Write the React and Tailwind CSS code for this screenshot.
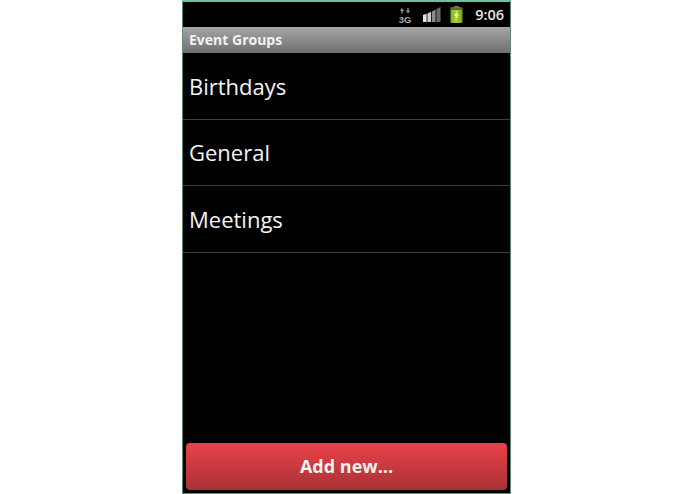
const font = { fontFamily: '"Open Sans", "Noto Sans", sans-serif' };

function DataIcon() {
  return (
    <svg width="14" height="16" viewBox="0 0 14 16" className="block">
      <path d="M4 1 L1.8 4 H3.3 V6.5 H4.7 V4 H6.2 Z" fill="#8e8e8e" />
      <path d="M10 6.5 L7.8 3.5 H9.3 V1 H10.7 V3.5 H12.2 Z" fill="#8e8e8e" />
      <text x="7" y="15.5" textAnchor="middle" fontSize="9.5" fontWeight="700" fill="#a8a8a8" fontFamily="Liberation Sans, sans-serif">3G</text>
    </svg>
  );
}

function SignalIcon() {
  return (
    <svg width="18" height="15" viewBox="0 0 18 15" className="block">
      <path d="M0 8 L3.6 6.8 V15 H0 Z" fill="#e4e4e4" />
      <path d="M4.4 6.5 L8 4.8 V15 H4.4 Z" fill="#cfcfcf" />
      <path d="M8.8 4.5 L12.6 2.4 V15 H8.8 Z" fill="#8a8a8a" />
      <path d="M13.4 2 L17.5 0 V15 H13.4 Z" fill="#6a6a6a" />
    </svg>
  );
}

function BatteryIcon() {
  return (
    <svg width="13" height="17" viewBox="0 0 13 17" className="block">
      <defs>
        <linearGradient id="bat" x1="0" y1="0" x2="1" y2="0">
          <stop offset="0" stopColor="#7fae1c" />
          <stop offset="0.5" stopColor="#a8d62c" />
          <stop offset="1" stopColor="#76a018" />
        </linearGradient>
      </defs>
      <rect x="4" y="0" width="5" height="2" fill="#6a6a6a" />
      <rect x="0.5" y="1.5" width="12" height="15.5" rx="1.5" fill="url(#bat)" />
      <rect x="0.5" y="1.5" width="12" height="2.5" fill="#5d6b3a" />
      <path d="M7.4 4.5 L3.8 10 H6 L5.2 14.5 L9.2 8.5 H7 Z" fill="#e4f29a" />
    </svg>
  );
}

function Row({ label }) {
  return (
    <div className="h-[66.5px] flex items-center pl-[6px] pt-[1px] border-b border-[#3f3f3f] text-[22px] text-[#f4f4f4]">
      {label}
    </div>
  );
}

export default function App() {
  return (
    <div className="w-[695px] h-[494px] bg-white overflow-hidden" style={font}>
      <div className="ml-[182px] w-[329px] h-[494px] flex flex-col bg-black border-x border-b border-[#5f8a79] border-t-2 border-t-[#63c79b]">
        <div className="h-[25px] shrink-0 flex items-center justify-end">
          <div className="mr-[7px]"><DataIcon /></div>
          <div className="ml-[4px]"><SignalIcon /></div>
          <div className="ml-[9px]"><BatteryIcon /></div>
          <div className="ml-[12px] mr-[6px] text-[14.5px] font-semibold text-[#e6e6e6]">9:06</div>
        </div>
        <div className="h-[26px] shrink-0 flex items-center pl-[6px] pb-[2px] bg-gradient-to-b from-[#a6a6a6] to-[#6f6f6f] text-[14px] font-bold text-[#f2f2f2]">
          Event Groups
        </div>
        <Row label="Birthdays" />
        <Row label="General" />
        <Row label="Meetings" />
        <div className="flex-1" />
        <div className="h-[47px] mb-[3px] mx-[3px] shrink-0 flex items-center justify-center rounded-[4px] bg-gradient-to-b from-[#ea4248] to-[#a83236] text-[18px] font-bold text-[#f0f0f0]">
          Add new...
        </div>
      </div>
    </div>
  );
}
